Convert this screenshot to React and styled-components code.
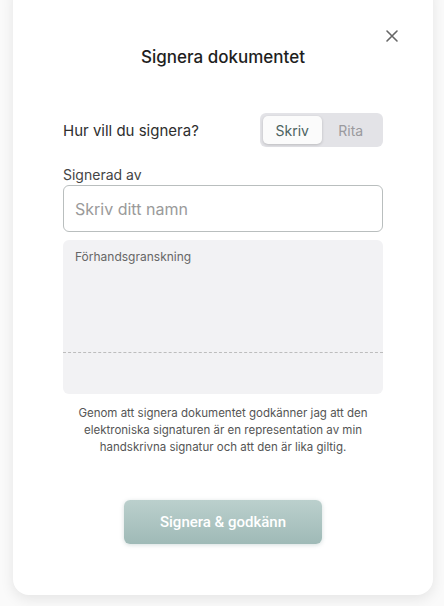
import React, { useState } from "react";
import styled, { createGlobalStyle } from "styled-components";

const GlobalStyle = createGlobalStyle`
  html, body {
    margin: 0;
    padding: 0;
    background: #fafafa;
    font-family: Inter, "Noto Sans", sans-serif;
  }
  * { box-sizing: border-box; }
`;

const Page = styled.div`
  width: 444px;
  height: 606px;
  overflow: hidden;
  padding: 0 11px 0 13px;
`;

const Card = styled.div`
  position: relative;
  margin-top: -20px;
  height: 615px;
  background: #fff;
  border-radius: 16px;
  box-shadow: 0 4px 14px rgba(0, 0, 0, 0.09);
  padding: 66px 50px 0;
  display: flex;
  flex-direction: column;
`;

const Close = styled.button`
  position: absolute;
  top: 48px;
  right: 33px;
  width: 16px;
  height: 16px;
  padding: 0;
  border: none;
  background: none;
  color: #666;
  cursor: pointer;
`;

const Title = styled.h2`
  margin: 0;
  text-align: center;
  font-size: 17px;
  font-weight: 500;
  color: #1e1e1e;
  line-height: 22px;
`;

const ModeRow = styled.div`
  display: flex;
  align-items: center;
  justify-content: space-between;
  margin-top: 45px;
`;

const Question = styled.span`
  font-size: 15px;
  color: #2e2e2e;
`;

const Toggle = styled.div`
  display: flex;
  width: 123px;
  height: 34px;
  padding: 3px;
  background: #e3e3e7;
  border-radius: 6px;
`;

const ToggleButton = styled.button`
  flex: 1;
  border: none;
  border-radius: 5px;
  font-family: inherit;
  font-size: 14px;
  cursor: pointer;
  background: ${(p) => (p.$active ? "#fbfbfb" : "transparent")};
  color: ${(p) => (p.$active ? "#4b625f" : "#9a9a9e")};
  box-shadow: ${(p) => (p.$active ? "0 1px 3px rgba(0,0,0,0.18)" : "none")};
`;

const Label = styled.label`
  display: block;
  margin-top: 19px;
  font-size: 14px;
  color: #444;
  line-height: 18px;
`;

const NameInput = styled.input`
  display: block;
  width: 100%;
  height: 47px;
  margin-top: 1px;
  padding: 0 11px;
  border: 1px solid #b9bebe;
  border-radius: 6px;
  font-family: inherit;
  font-size: 16px;
  color: #333;
  outline: none;
  &::placeholder { color: #9a9a9a; }
`;

const Preview = styled.div`
  margin-top: 8px;
  height: 154px;
  background: #f2f2f4;
  border-radius: 6px;
  padding: 10px 12px 0;
  display: flex;
  flex-direction: column;
`;

const PreviewLabel = styled.span`
  font-size: 12px;
  color: #666;
  line-height: 14px;
`;

const SignLine = styled.div`
  margin: 88px -12px 0;
  border-top: 1px dashed #bdbdbd;
`;

const Disclaimer = styled.p`
  margin: 11px 8px 0;
  text-align: center;
  font-size: 11.5px;
  line-height: 17px;
  color: #555;
`;

const Submit = styled.button`
  align-self: center;
  margin-top: 44px;
  width: 198px;
  height: 44px;
  border: none;
  border-radius: 6px;
  background: linear-gradient(180deg, #bbd0cd 0%, #9fbab7 100%);
  box-shadow: 0 1px 4px rgba(80, 120, 115, 0.25);
  color: #fff;
  font-family: Roboto, "Noto Sans", sans-serif;
  font-size: 15px;
  font-weight: 500;
  cursor: pointer;
`;

const App = () => {
  const [mode, setMode] = useState("skriv");
  return (
    <Page>
      <GlobalStyle />
      <Card>
        <Close aria-label="Stäng">
          <svg width="16" height="16" viewBox="0 0 16 16" fill="none">
            <path d="M3 3l10 10M13 3L3 13" stroke="currentColor" strokeWidth="1.6" strokeLinecap="round" />
          </svg>
        </Close>
        <Title>Signera dokumentet</Title>
        <ModeRow>
          <Question>Hur vill du signera?</Question>
          <Toggle>
            <ToggleButton $active={mode === "skriv"} onClick={() => setMode("skriv")}>
              Skriv
            </ToggleButton>
            <ToggleButton $active={mode === "rita"} onClick={() => setMode("rita")}>
              Rita
            </ToggleButton>
          </Toggle>
        </ModeRow>
        <Label htmlFor="name">Signerad av</Label>
        <NameInput id="name" placeholder="Skriv ditt namn" />
        <Preview>
          <PreviewLabel>Förhandsgranskning</PreviewLabel>
          <SignLine />
        </Preview>
        <Disclaimer>
          Genom att signera dokumentet godkänner jag att den elektroniska signaturen är en
          representation av min handskrivna signatur och att den är lika giltig.
        </Disclaimer>
        <Submit>Signera &amp; godkänn</Submit>
      </Card>
    </Page>
  );
};

export default App;
